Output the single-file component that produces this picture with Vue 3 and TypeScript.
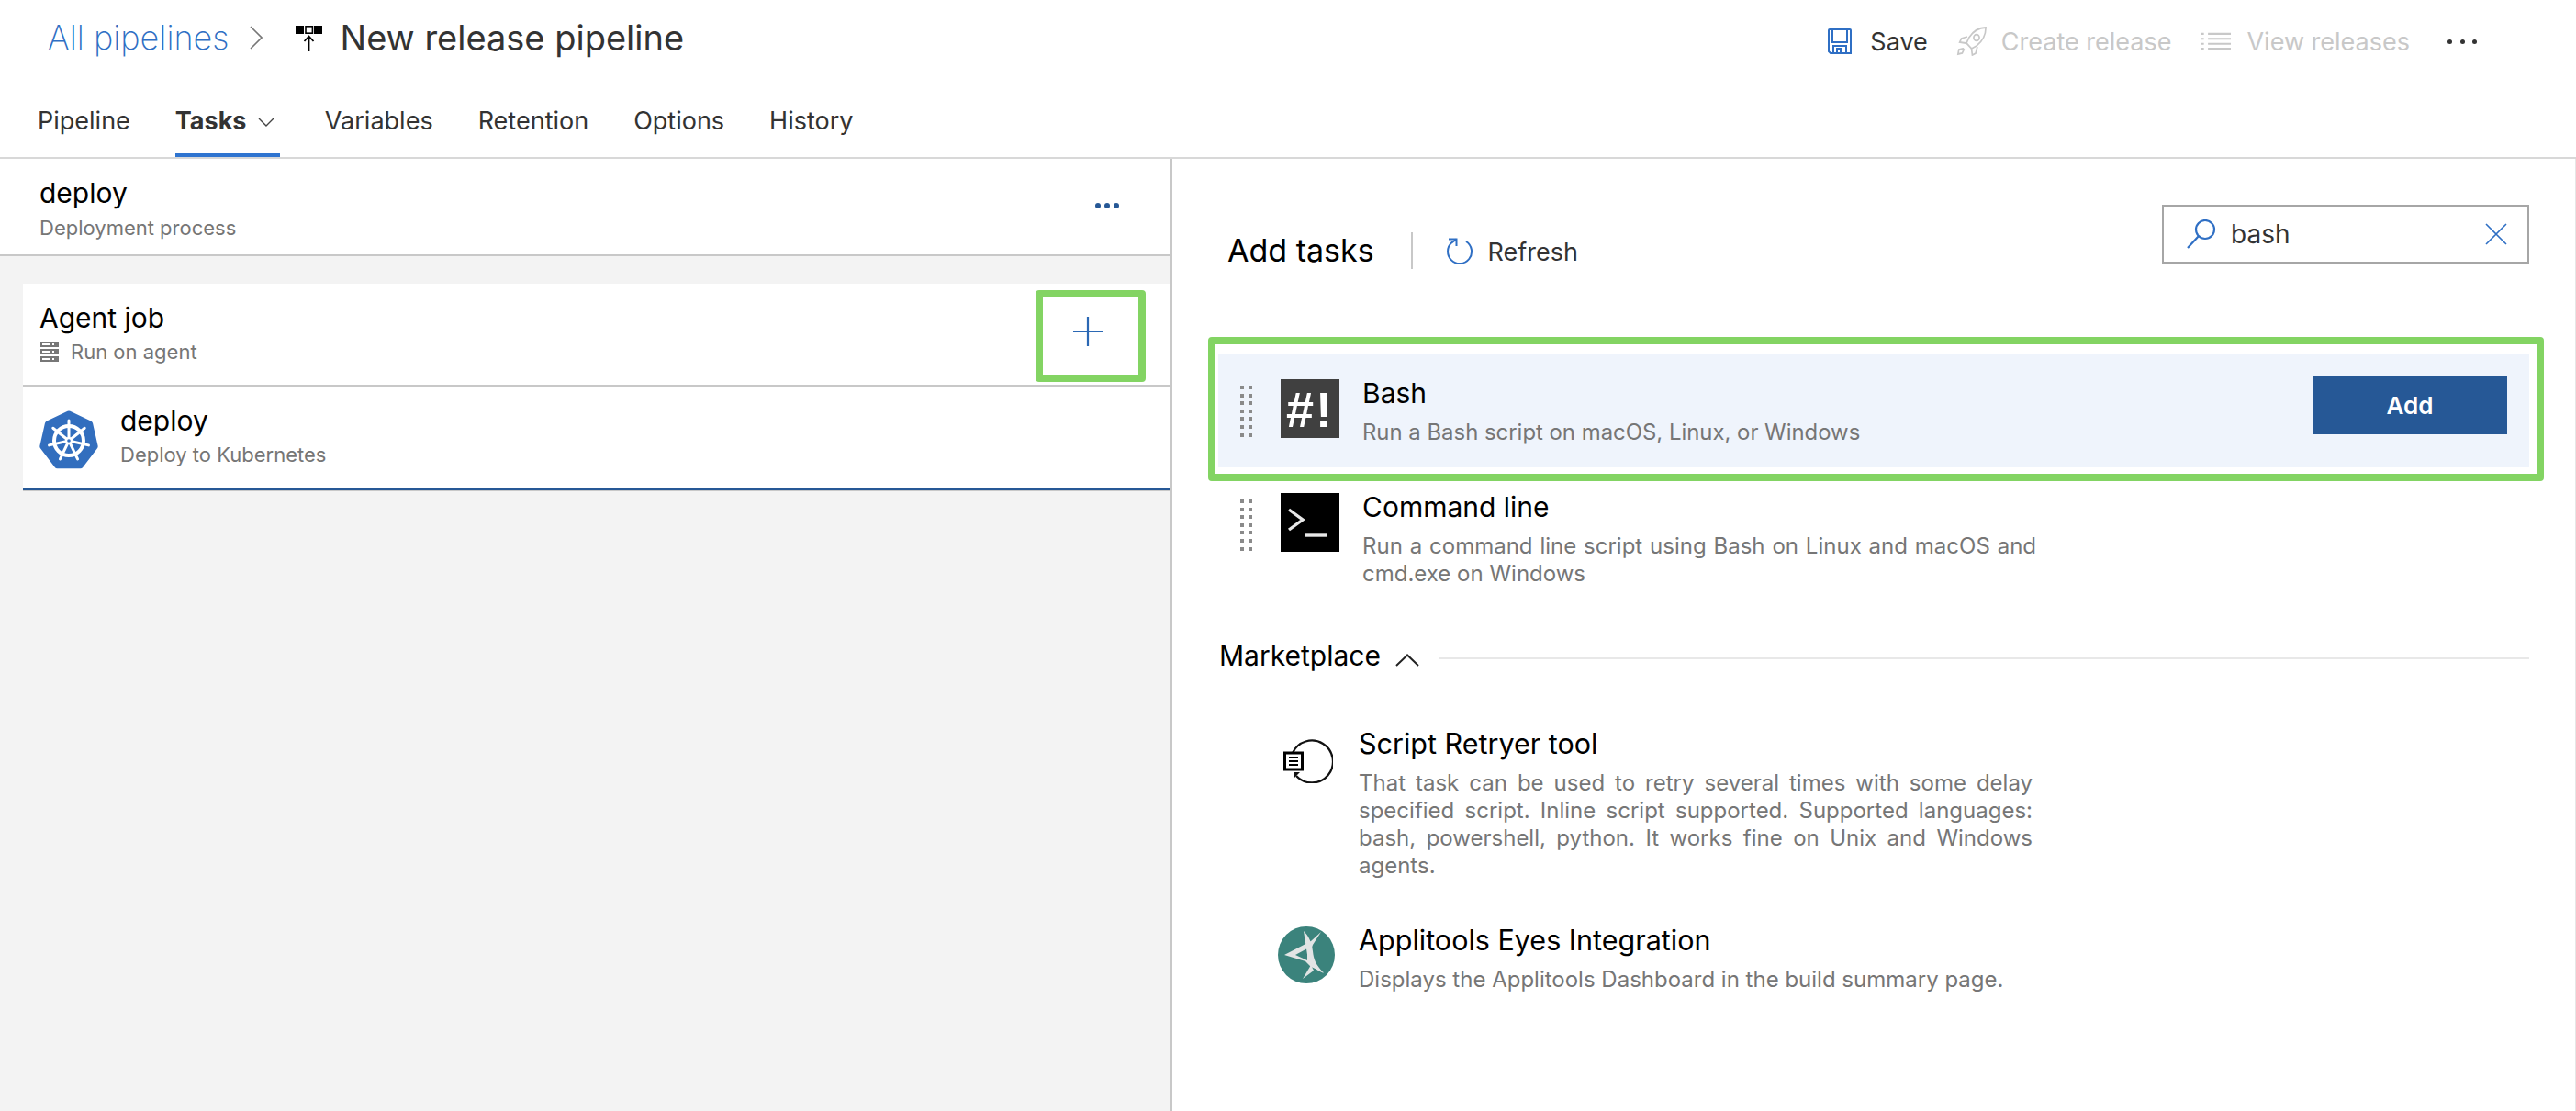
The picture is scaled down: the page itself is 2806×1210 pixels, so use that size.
<script setup lang="ts">
const tabs = [
  { label: 'Pipeline' },
  { label: 'Tasks', active: true },
  { label: 'Variables' },
  { label: 'Retention' },
  { label: 'Options' },
  { label: 'History' },
]
const spokes = [0, 51.43, 102.86, 154.29, 205.71, 257.14, 308.57]
const gripDots = Array.from({ length: 14 })
</script>

<template>
  <div class="page">
    <header class="header">
      <div class="top-row">
        <div class="crumbs">
          <a class="all-link">All pipelines</a>
          <svg class="crumb-chev" width="14" height="26" viewBox="0 0 14 26"><path d="M1 1l12 12L1 25" fill="none" stroke="#777" stroke-width="1.6" /></svg>
          <svg class="pipe-icon" width="30" height="30" viewBox="0 0 30 30">
            <rect x="0" y="2" width="9" height="9" fill="#000" />
            <rect x="11" y="2.8" width="7.4" height="7.4" fill="#fff" stroke="#000" stroke-width="1.6" />
            <rect x="20" y="2" width="9" height="9" fill="#000" />
            <path d="M14.5 30V14M9.5 19l5-5.5 5 5.5" fill="none" stroke="#000" stroke-width="1.8" />
          </svg>
          <h1 class="title">New release pipeline</h1>
        </div>
        <div class="actions">
          <button class="act save">
            <svg width="26" height="28" viewBox="0 0 26 28">
              <path d="M2 1h22a1 1 0 0 1 1 1v25H3l-2-2V2a1 1 0 0 1 1-1z" fill="none" stroke="#2f6fc4" stroke-width="2" />
              <path d="M5 2v13h16V2" fill="none" stroke="#2f6fc4" stroke-width="2" />
              <path d="M6 27v-8h14v8M10 27v-5h4v5" fill="none" stroke="#2f6fc4" stroke-width="2" />
            </svg>
            <span>Save</span>
          </button>
          <button class="act off rocket">
            <svg width="33" height="32" viewBox="0 0 36 32" preserveAspectRatio="none">
              <g fill="none" stroke="#c8c8c8" stroke-width="1.8">
                <path d="M35 1c-8 0-15 4-20 11l-3 6 6 6 6-3c7-5 11-12 11-20z" />
                <circle cx="24" cy="12" r="3.4" />
                <path d="M13 11l-7 2-2 4 7 1M25 22l-2 7-4 2-1-7M8 24l-5 1-1 5 5-1 2-4z" />
              </g>
            </svg>
            <span>Create release</span>
          </button>
          <button class="act off list">
            <svg width="32" height="20" viewBox="0 0 36 22" preserveAspectRatio="none">
              <g stroke="#c8c8c8" stroke-width="2.4">
                <path d="M8 2h28M8 8h28M8 14h28M8 20h28" />
                <path d="M0 2h3M0 8h3M0 14h3M0 20h3" />
              </g>
            </svg>
            <span>View releases</span>
          </button>
          <div class="more"><i></i><i></i><i></i></div>
        </div>
      </div>
      <nav class="tabs">
        <a v-for="t in tabs" :key="t.label" class="tab" :class="{ active: t.active }">
          {{ t.label }}
          <svg v-if="t.active" class="tab-chev" width="18" height="10" viewBox="0 0 18 10"><path d="M1 1l8 8 8-8" fill="none" stroke="#444" stroke-width="1.4" /></svg>
        </a>
      </nav>
    </header>

    <main class="main">
      <section class="left">
        <div class="left-head">
          <div>
            <div class="name">deploy</div>
            <div class="sub head-sub">Deployment process</div>
          </div>
          <div class="blue-dots"><i></i><i></i><i></i></div>
        </div>
        <div class="canvas">
          <div class="card">
            <div class="job-row">
              <div>
                <div class="name">Agent job</div>
                <div class="sub agent-sub">
                  <svg width="20" height="22" viewBox="0 0 20 22">
                    <g fill="#777">
                      <rect x="0" y="0" width="20" height="6" />
                      <rect x="0" y="8" width="20" height="6" />
                      <rect x="0" y="16" width="20" height="6" />
                    </g>
                    <g fill="#fff">
                      <rect x="2" y="2" width="8" height="2" />
                      <rect x="2" y="10" width="8" height="2" />
                      <rect x="2" y="18" width="8" height="2" />
                      <rect x="13" y="2" width="2" height="2" />
                      <rect x="13" y="10" width="2" height="2" />
                      <rect x="13" y="18" width="2" height="2" />
                    </g>
                  </svg>
                  <span>Run on agent</span>
                </div>
              </div>
              <svg class="plus" width="32" height="32" viewBox="0 0 32 32"><path d="M16 0v32M0 16h32" stroke="#2b68b4" stroke-width="2.2" /></svg>
              <div class="mark plus-mark"></div>
            </div>
            <div class="task-row">
              <svg class="k8s" width="64" height="64" viewBox="0 0 64 64">
                <path d="M32 .5a3 3 0 0 1 1.4.3l22.6 10.6a4 4 0 0 1 2 2.4l5.6 24.6a3.6 3.6 0 0 1-.6 2.8L47.2 62a3.4 3.4 0 0 1-2.6 1.2H19.4A3.4 3.4 0 0 1 16.800 62L1 41.200a3.600 3.600 0 0 1-.6-2.800L6 13.800a4 4 0 0 1 2-2.400L30.600.8A3 3 0 0 1 32 .5z" fill="#326ebe" />
                <g fill="none" stroke="#fff">
                  <circle cx="32" cy="33" r="16" stroke-width="4" />
                  <g v-for="a in spokes" :key="a" :transform="`rotate(${a} 32 33)`">
                    <path d="M32 33V11" stroke-width="3" stroke-linecap="round" />
                  </g>
                </g>
                <circle cx="32" cy="33" r="4" fill="#fff" />
                <circle cx="32" cy="33" r="1.8" fill="#326ebe" />
              </svg>
              <div class="task-copy">
                <div class="name">deploy</div>
                <div class="sub">Deploy to Kubernetes</div>
              </div>
            </div>
          </div>
        </div>
      </section>

      <section class="right">
        <div class="right-head">
          <div class="add-group">
            <h2 class="add-title">Add tasks</h2>
            <span class="v-sep"></span>
            <button class="refresh">
              <svg width="30" height="30" viewBox="0 0 30 30">
                <path d="M21 4A13 13 0 1 1 5.600 5.100L10.500 1.500" fill="none" stroke="#2f6fc4" stroke-width="2" />
                <path d="M2 1.500h8.500V9" fill="none" stroke="#2f6fc4" stroke-width="2" />
              </svg>
              <span>Refresh</span>
            </button>
          </div>
          <div class="search">
            <svg width="32" height="32" viewBox="0 0 32 32">
              <circle cx="20" cy="11" r="10" fill="none" stroke="#2f6fc4" stroke-width="2.2" />
              <path d="M13 18L1 31" stroke="#2f6fc4" stroke-width="2.2" />
            </svg>
            <span class="search-text">bash</span>
            <svg class="clear" width="24" height="24" viewBox="0 0 24 24"><path d="M1 1l22 22M23 1L1 23" stroke="#2f6fc4" stroke-width="1.6" /></svg>
          </div>
        </div>

        <div class="task-item hl">
          <div class="grip"><i v-for="(_, i) in gripDots" :key="i"></i></div>
          <div class="tile bash-tile">#!</div>
          <div class="task-text">
            <div class="name">Bash</div>
            <div class="desc">Run a Bash script on macOS, Linux, or Windows</div>
          </div>
          <button class="add-btn">Add</button>
          <div class="mark bash-mark"></div>
        </div>

        <div class="task-item">
          <div class="grip"><i v-for="(_, i) in gripDots" :key="i"></i></div>
          <div class="tile cmd-tile">
            <svg width="64" height="64" viewBox="0 0 64 64">
              <path d="M9 18l15 11-15 11" fill="none" stroke="#e8e8e8" stroke-width="3.4" />
              <path d="M26 46h24" stroke="#e8e8e8" stroke-width="3.4" />
            </svg>
          </div>
          <div class="task-text">
            <div class="name">Command line</div>
            <div class="desc wide just">Run a command line script using Bash on Linux and macOS and cmd.exe on Windows</div>
          </div>
        </div>

        <div class="market-head">
          <span class="name">Marketplace</span>
          <svg width="26" height="14" viewBox="0 0 26 14"><path d="M1 13L13 1.5 25 13" fill="none" stroke="#222" stroke-width="2" /></svg>
          <span class="h-line"></span>
        </div>

        <div class="market-item first">
          <div class="market-icon">
            <svg class="retry" width="54" height="50" viewBox="0 0 54 50">
              <path d="M10 17A23 23 0 1 1 14 42" fill="none" stroke="#111" stroke-width="2.2" />
              <path d="M11 45v-7h7z" fill="#111" />
              <rect x="1.5" y="17" width="19" height="18" fill="#fff" stroke="#000" stroke-width="3" />
              <path d="M6 22h10M6 26h10M6 30h10" stroke="#000" stroke-width="2" />
            </svg>
          </div>
          <div class="task-text">
            <div class="name large">Script Retryer tool</div>
            <div class="desc wide just">That task can be used to retry several times with some delay specified script. Inline script supported. Supported languages: bash, powershell, python. It works fine on Unix and Windows agents.</div>
          </div>
        </div>

        <div class="market-item">
          <div class="market-icon">
            <svg class="appli" width="62" height="62" viewBox="0 0 62 62">
              <circle cx="31" cy="31" r="31" fill="#3b837c" />
              <path d="M7 31L36 16l11-10-9 14-3 9 2 11 13 10-14-6-6-6z" fill="#e2e4e4" />
              <path d="M19 31l13-7 0 13z" fill="#3b837c" />
              <path d="M28 5c6 6 9 13 10 22s3 14 12 24c-9-4-14-8-17-14" fill="#e2e4e4" />
              <path d="M27 57l9-15 3 6z" fill="#e2e4e4" />
            </svg>
          </div>
          <div class="task-text">
            <div class="name large">Applitools Eyes Integration</div>
            <div class="desc wide">Displays the Applitools Dashboard in the build summary page.</div>
          </div>
        </div>
      </section>
    </main>
  </div>
</template>

<style>
html, body { margin: 0; background: #fff; }
</style>

<style scoped>
.page {
  width: 2806px;
  height: 1210px;
  overflow: hidden;
  display: flex;
  flex-direction: column;
  font-family: Inter, "Noto Sans", sans-serif;
  color: #000;
  background: #fff;
}
button { font: inherit; background: none; border: 0; padding: 0; margin: 0; }
h1, h2 { margin: 0; font-weight: 400; }

.header { height: 173px; box-sizing: border-box; border-bottom: 2px solid #d8d8d8; }
.top-row { height: 80px; display: flex; justify-content: space-between; align-items: center; }
.crumbs { display: flex; align-items: center; padding-left: 52px; padding-top: 2px; }
.all-link { font-size: 36px; font-weight: 200; color: #2f6fc4; line-height: 44px; white-space: nowrap; }
.crumb-chev { margin-left: 22px; }
.pipe-icon { margin-left: 36px; }
.title { margin-left: 19px; font-size: 38px; line-height: 44px; color: #333; white-space: nowrap; }

.actions { display: flex; align-items: center; padding: 10px 108px 0 0; }
.act { display: flex; align-items: center; font-size: 27px; color: #333; white-space: nowrap; }
.act.save { gap: 20px; margin-right: 31px; }
.act.off { color: #c8c8c8; }
.act.rocket { gap: 16px; margin-right: 33px; }
.act.list { gap: 17px; margin-right: 41px; }
.more { display: flex; gap: 8.5px; width: 32px; }
.more i { width: 5px; height: 5px; border-radius: 50%; background: #333; display: block; }

.tabs { display: flex; padding-left: 41px; gap: 49px; height: 91px; }
.tab { box-sizing: border-box; height: 91px; padding-top: 35px; line-height: 34px; font-size: 27px; color: #333; border-bottom: 4px solid transparent; display: block; white-space: nowrap; }
.tab.active { font-weight: 700; border-bottom-color: #2f74d0; }
.tab-chev { margin-left: 6px; vertical-align: 3px; margin-right: 6px; }

.main { flex: 1; display: flex; min-height: 0; }
.left { width: 1277px; box-sizing: border-box; border-right: 2px solid #c8c8c8; display: flex; flex-direction: column; }
.left-head { box-sizing: border-box; height: 106px; border-bottom: 2px solid #c8c8c8; padding: 20px 56px 0 43px; display: flex; justify-content: space-between; align-items: flex-start; }
.name { font-size: 30px; line-height: 34px; color: #000; white-space: nowrap; }
.name.large { font-size: 30.5px; }
.sub { font-size: 22px; line-height: 28px; margin-top: 6px; color: #767676; white-space: nowrap; }
.head-sub { margin-top: 7px; }
.blue-dots { display: flex; gap: 4px; margin-top: 28px; }
.blue-dots i { width: 6px; height: 6px; border-radius: 50%; background: #265896; display: block; }

.canvas { flex: 1; background: #f3f3f3; padding: 30px 0 0 25px; }
.card { background: #fff; border-bottom: 1.5px solid #c8c8c8; }
.job-row { position: relative; box-sizing: border-box; height: 112px; padding: 20px 74px 0 18px; display: flex; justify-content: space-between; align-items: flex-start; border-bottom: 2px solid #c8c8c8; }
.agent-sub { display: flex; align-items: center; gap: 13px; padding-left: 1px; }
.plus { margin-top: 16px; }
.mark { position: absolute; box-sizing: border-box; border: 8px solid #83d463; border-radius: 4px; pointer-events: none; }
.plus-mark { width: 120px; height: 100px; top: 7px; right: 27px; }
.task-row { box-sizing: border-box; height: 113px; border-bottom: 3px solid #265896; padding-left: 18px; display: flex; align-items: center; gap: 24px; }
.task-copy { margin-bottom: 2px; }
.k8s { margin-top: 6px; }

.right { flex: 1; box-sizing: border-box; border-right: 1px solid #e6e6e6; padding: 50px 50px 0; }
.right-head { display: flex; justify-content: space-between; align-items: flex-start; height: 64px; margin-bottom: 98px; }
.add-group { display: flex; align-items: center; height: 40px; margin-top: 30px; padding-left: 10px; }
.add-title { font-size: 34px; line-height: 40px; color: #000; white-space: nowrap; }
.v-sep { width: 2px; height: 40px; background: #c8c8c8; margin: 0 37px 0 40px; }
.refresh { display: flex; align-items: center; gap: 15px; font-size: 27px; color: #333; padding-top: 2px; }
.search { box-sizing: border-box; width: 400px; height: 64px; border: 2px solid #a6a6a6; display: flex; align-items: center; padding: 0 22px 0 25px; }
.search svg { flex: none; }
.search-text { flex: 1; font-size: 28px; margin-left: 16px; color: #333; }

.task-item { position: relative; display: flex; align-items: flex-start; padding: 26px 24px 0; }
.task-item.hl { height: 124px; box-sizing: border-box; background: #eff4fc; }
.bash-mark { left: -11px; top: -18px; right: -16px; bottom: -15px; }
.grip { width: 13px; margin-top: 9px; display: grid; grid-template-columns: 4px 4px; column-gap: 5px; row-gap: 4.6px; }
.grip i { width: 4px; height: 4px; background: #8a8a8a; display: block; }
.tile { width: 64px; height: 64px; margin: 2px 25px 0 31px; flex: none; }
.bash-tile { background: #404040; color: #fff; font: 700 54px/66px "Liberation Sans", sans-serif; text-align: center; letter-spacing: 2px; }
.cmd-tile { background: #000; }
.cmd-tile svg { display: block; }
.desc { font-size: 23.9px; line-height: 30px; margin-top: 11px; color: #767676; }
.desc.wide { width: 734px; font-size: 24px; }
.desc.just { text-align: justify; }
.add-btn { margin-left: auto; margin-top: -2px; width: 212px; height: 64px; background: #265896; color: #fff; font-size: 26px; font-weight: 600; }

.market-head { display: flex; align-items: center; margin-top: 57px; padding-left: 1px; }
.market-head svg { margin-left: 16px; margin-top: 9px; }
.h-line { flex: 1; height: 2px; background: #e8e8e8; margin-left: 22px; margin-top: 6px; }

.market-item { display: flex; align-items: flex-start; padding-left: 65px; margin-top: 49px; }
.market-item.first { margin-top: 62px; }
.market-icon { width: 88px; flex: none; }
.retry { display: block; margin: 10px 0 0 6px; }
.appli { display: block; margin-top: 2px; }
</style>
